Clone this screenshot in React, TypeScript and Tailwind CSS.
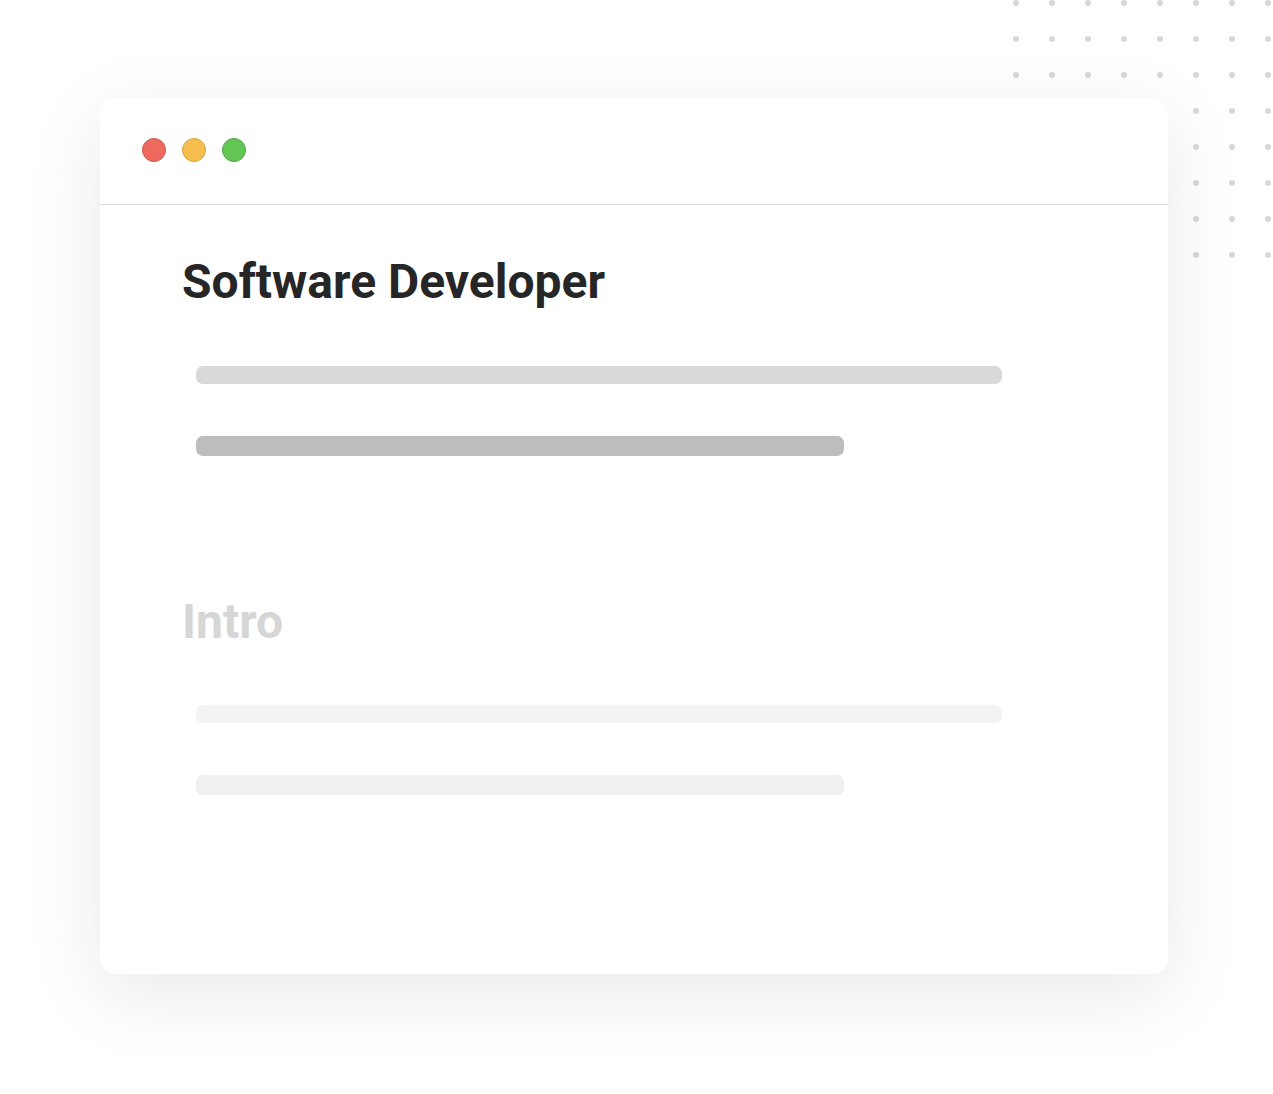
const dots = Array.from({ length: 64 }, (_, i) => i);

const Bar = ({ className }: { className: string }) => (
  <div className={`rounded-[7px] ${className}`} />
);

export default function App() {
  return (
    <div className="relative min-h-[1094px] w-full overflow-hidden bg-white font-['Roboto',sans-serif]">

      {/* DOT GRID */}
      <div className="absolute left-[1013px] top-0 grid grid-cols-8 gap-x-[30px] gap-y-[30px]">
        {dots.map((d) => (
          <span key={d} className="block h-[6px] w-[6px] rounded-full bg-[#d8d8d8]" />
        ))}
      </div>

      {/* WINDOW CARD */}
      <div className="relative ml-[100px] mt-[98px] h-[876px] w-[1068px] rounded-2xl bg-white shadow-[0_20px_80px_rgba(0,0,0,0.09)]">

        {/* TITLE BAR */}
        <div className="flex h-[107px] items-center gap-4 border-b border-[#dcdcdc] pl-[42px] pb-[2px]">
          <span className="h-6 w-6 rounded-full border border-[#d2564b] bg-[#ee6a5f]" />
          <span className="h-6 w-6 rounded-full border border-[#d9a23f] bg-[#f5be4f]" />
          <span className="h-6 w-6 rounded-full border border-[#4ea845] bg-[#62c554]" />
        </div>

        {/* CONTENT */}
        <div className="pl-[82px] pt-[47px]">

          <h1 className="text-[48px] font-bold leading-[60px] text-[#262626]">
            Software Developer
          </h1>

          <div className="mt-[54px] flex flex-col gap-[52px] pl-[14px]">
            <Bar className="h-[18px] w-[806px] bg-[#d9d9d9]" />
            <Bar className="h-[20px] w-[648px] bg-[#bdbdbd]" />
          </div>

          <h2 className="mt-[136px] text-[48px] font-bold leading-[60px] text-[#d6d6d6]">
            Intro
          </h2>

          <div className="mt-[53px] flex flex-col gap-[52px] pl-[14px]">
            <Bar className="h-[18px] w-[806px] bg-[#f3f3f3]" />
            <Bar className="h-[20px] w-[648px] bg-[#f0f0f0]" />
          </div>

        </div>

      </div>

    </div>
  );
}
